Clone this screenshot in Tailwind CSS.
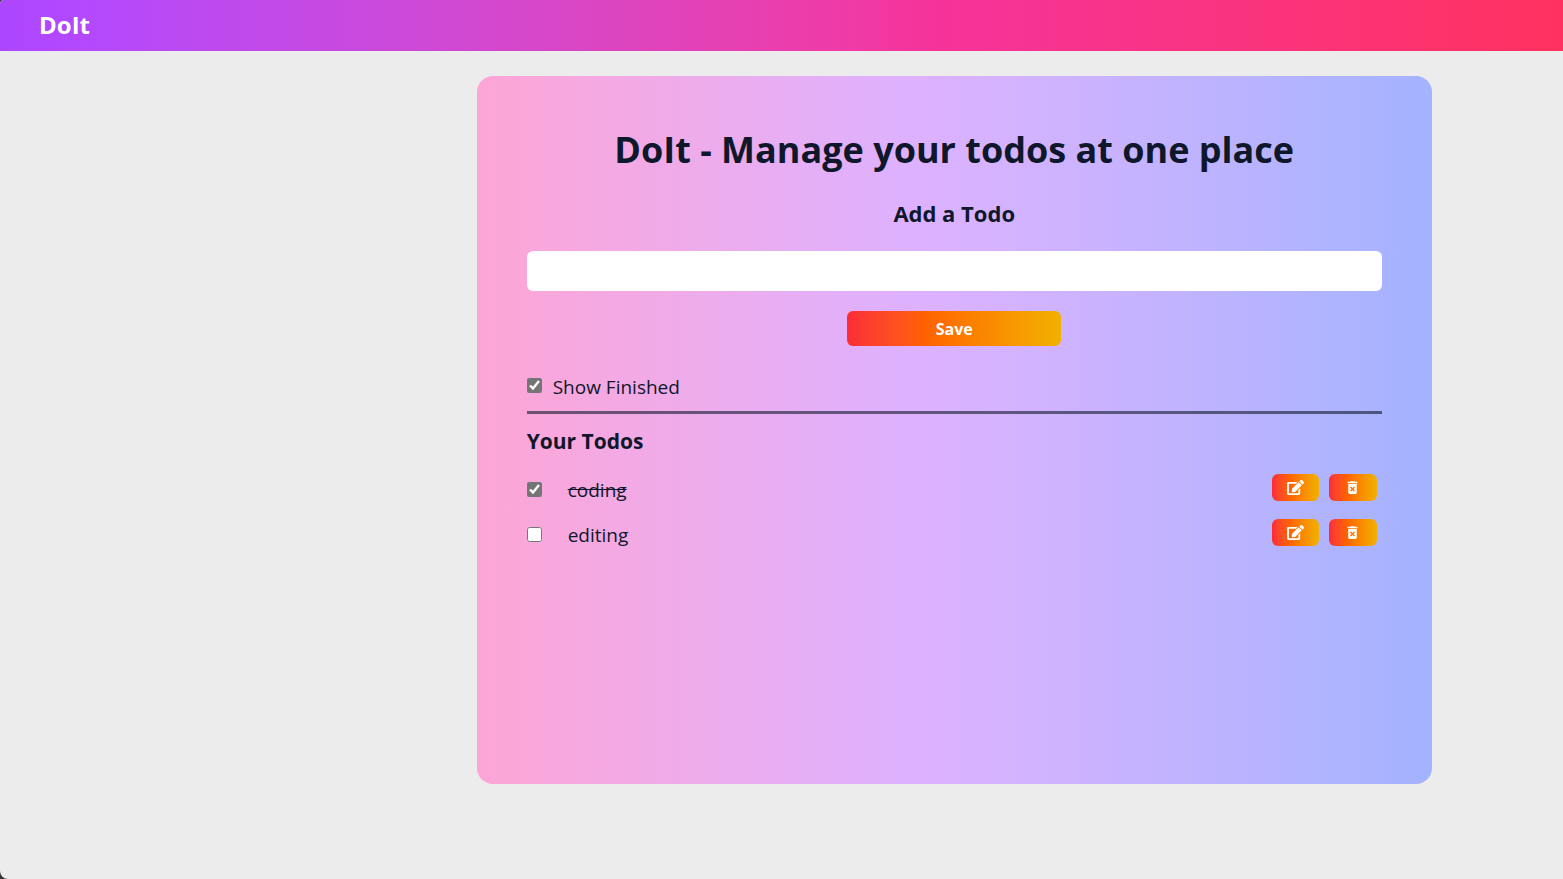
<!DOCTYPE html>
<html lang="en">
<head>
<meta charset="utf-8">
<meta name="viewport" content="width=device-width, initial-scale=1">
<title>DoIt</title>
<script src="https://cdn.jsdelivr.net/npm/@tailwindcss/browser@4"></script>
</head>
<body class="bg-[#333333] font-['Open_Sans','Noto_Sans',sans-serif] text-[#0f172b]">
<svg class="hidden" aria-hidden="true">
  <symbol id="edit" viewBox="0 0 576 512"><path fill="currentColor" d="M402.6 83.2l90.2 90.2c3.8 3.8 3.8 10 0 13.800L274.400 405.600l-92.800 10.300c-12.400 1.400-22.900-9.100-21.500-21.500l10.300-92.800L388.800 83.200c3.800-3.800 10-3.800 13.800 0zm162-22.900l-48.800-48.800c-15.200-15.200-39.900-15.200-55.200 0l-35.400 35.400c-3.800 3.800-3.800 10 0 13.800l90.200 90.200c3.800 3.800 10 3.800 13.800 0l35.400-35.400c15.200-15.300 15.200-40 0-55.200zM384 346.200V448H64V128h229.800c3.200 0 6.200-1.300 8.500-3.500l40-40c7.600-7.600 2.200-20.500-8.500-20.500H48C21.500 64 0 85.500 0 112v352c0 26.500 21.500 48 48 48h352c26.500 0 48-21.500 48-48V306.200c0-10.700-12.900-16-20.500-8.500l-40 40c-2.200 2.300-3.500 5.300-3.500 8.500z"/></symbol>
  <symbol id="trash" viewBox="0 0 24 24"><path fill="currentColor" d="M6 19c0 1.100.9 2 2 2h8c1.100 0 2-.9 2-2V7H6v12zm2.460-7.120l1.410-1.410L12 12.590l2.120-2.120 1.410 1.410L13.410 14l2.120 2.120-1.410 1.410L12 15.410l-2.120 2.120-1.410-1.410L10.590 14l-2.130-2.120zM15.500 4l-1-1h-5l-1 1H5v2h14V4z"/></symbol>
</svg>
<div class="min-h-screen overflow-hidden rounded-tl-sm rounded-bl-lg bg-[#ececec] pb-10">
  <nav class="flex h-[51px] items-center bg-linear-to-r from-purple-500 via-pink-500 via-60% to-[#ff315f] px-[39px] pb-0.5">
    <span class="text-2xl leading-8 font-bold text-white">DoIt</span>
  </nav>
  <main class="mt-[25px] mr-[8.4%] ml-[30.5%] min-h-[708px] rounded-2xl bg-linear-to-r from-pink-300 via-purple-300 to-indigo-300 p-[50px]">
    <h1 class="text-center text-4xl leading-12 font-bold">DoIt - Manage your todos at one place</h1>
    <form class="flex flex-col items-center">
      <label for="todo" class="mt-[25px] text-[22px] leading-7 font-bold">Add a Todo</label>
      <input id="todo" type="text" class="mt-6 h-10 w-full rounded-md bg-white px-5">
      <button type="button" class="mt-5 h-[35px] w-1/4 rounded-md bg-linear-to-r from-red-500 via-[#ff5f00] via-35% to-yellow-500 text-base font-bold text-white">Save</button>
    </form>
    <div class="mt-7 flex h-7 items-start">
      <input id="finished" type="checkbox" checked class="mt-1 size-[15px] accent-[#757575]">
      <label for="finished" class="ml-[11px] text-[19px] leading-[26px]">Show Finished</label>
    </div>
    <hr class="mt-[9px] border-0 bg-[#0f172b] opacity-60 h-[3px]">
    <h2 class="mt-3.5 text-[21px] leading-[26px] font-bold">Your Todos</h2>
    <ul class="mt-5 flex flex-col gap-[18px]">
      <li class="flex h-[27px] items-start pr-[5px]">
        <input id="t1" type="checkbox" checked class="mt-2 size-[15px] accent-[#757575]">
        <label for="t1" class="mt-0.5 ml-[26px] text-[19px] leading-7 line-through">coding</label>
        <div class="ml-auto flex gap-2.5 text-white">
          <button aria-label="Edit coding" class="flex h-[27px] w-[47px] items-center justify-center rounded-md bg-linear-to-r from-red-500 via-[#ff5f00] via-35% to-yellow-500"><svg class="h-[15px] w-[17px]"><use href="#edit"/></svg></button>
          <button aria-label="Delete coding" class="flex h-[27px] w-12 items-center justify-center rounded-md bg-linear-to-r from-red-500 via-[#ff5f00] via-35% to-yellow-500"><svg class="size-[17px]"><use href="#trash"/></svg></button>
        </div>
      </li>
      <li class="flex h-[27px] items-start pr-[5px]">
        <input id="t2" type="checkbox" class="mt-2 size-[15px] accent-[#757575]">
        <label for="t2" class="mt-0.5 ml-[26px] text-[19px] leading-7">editing</label>
        <div class="ml-auto flex gap-2.5 text-white">
          <button aria-label="Edit editing" class="flex h-[27px] w-[47px] items-center justify-center rounded-md bg-linear-to-r from-red-500 via-[#ff5f00] via-35% to-yellow-500"><svg class="h-[15px] w-[17px]"><use href="#edit"/></svg></button>
          <button aria-label="Delete editing" class="flex h-[27px] w-12 items-center justify-center rounded-md bg-linear-to-r from-red-500 via-[#ff5f00] via-35% to-yellow-500"><svg class="size-[17px]"><use href="#trash"/></svg></button>
        </div>
      </li>
    </ul>
  </main>
</div>
</body>
</html>
